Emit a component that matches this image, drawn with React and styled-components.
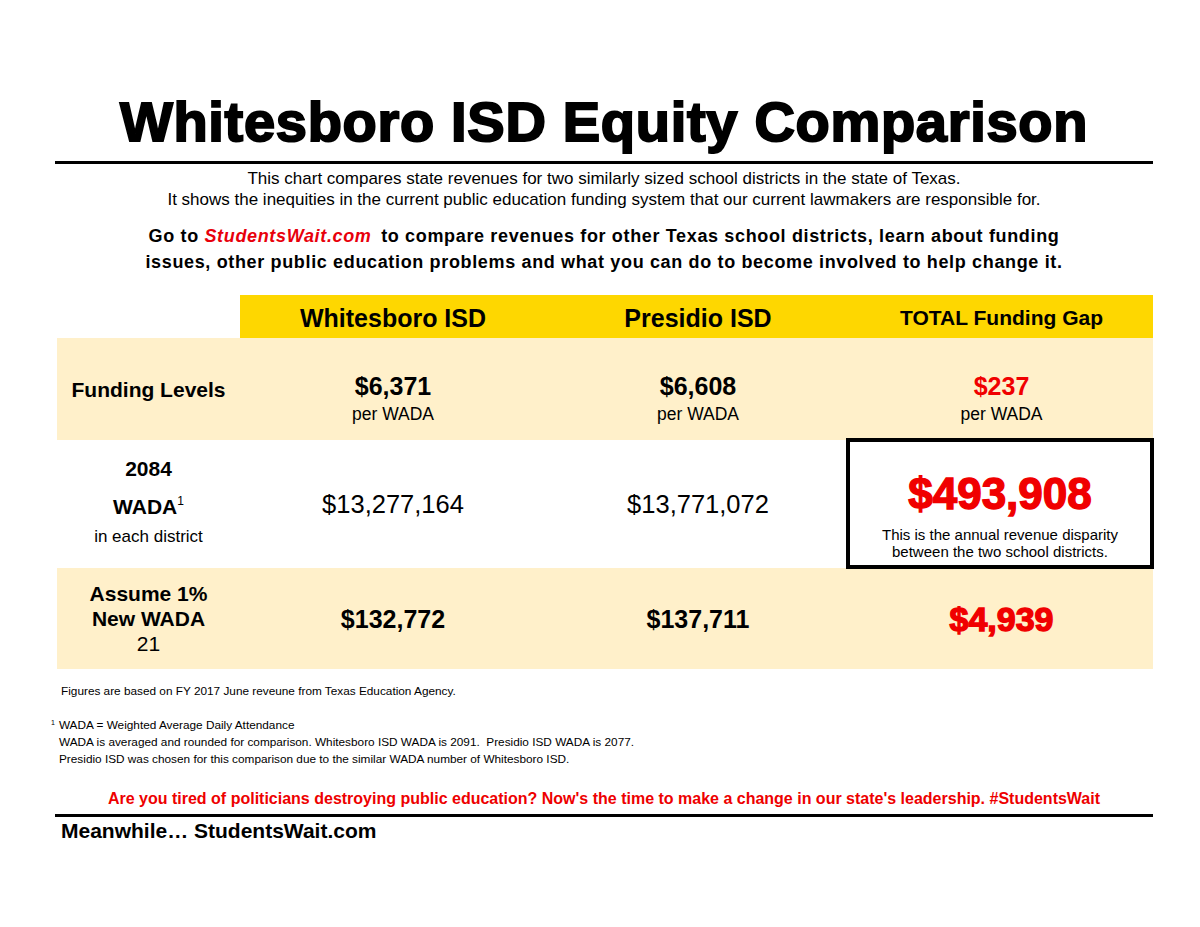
import React from "react";
import styled, { createGlobalStyle } from "styled-components";

const Global = createGlobalStyle`
  html, body { margin: 0; padding: 0; background: #fff; }
  body { font-family: "Liberation Sans", Arial, sans-serif; color: #000; }
`;

const Page = styled.div`
  width: 1098px;
  margin-left: 55px;
  padding-top: 90px;
  display: flex;
  flex-direction: column;
`;

const Title = styled.h1`
  margin: 0;
  font-size: 56px;
  line-height: 64px;
  font-weight: 700;
  text-align: center;
  -webkit-text-stroke: 2px #000;
  letter-spacing: 0.7px;
  white-space: nowrap;
`;

const Rule = styled.div`
  height: 3px;
  background: #000;
  margin-top: ${(p) => p.$top || 0}px;
`;

const Intro = styled.p`
  margin: 4px 0 0;
  font-size: 17px;
  line-height: 21px;
  text-align: center;
`;

const GoText = styled.p`
  margin: 13px 0 0;
  font-size: 18px;
  line-height: 26px;
  font-weight: 700;
  letter-spacing: 0.65px;
  text-align: center;
  white-space: nowrap;
`;

const Link = styled.span`
  color: #e8000b;
  font-style: italic;
  margin-right: 4px;
`;

const Table = styled.div`
  margin-top: 20px;
  margin-left: 2px;
  display: grid;
  grid-template-columns: 183px 306px 304px 303px;
`;

const HeadBlank = styled.div``;

const HeadCell = styled.div`
  background: #fed700;
  height: 43px;
  padding-top: 3px;
  box-sizing: border-box;
  display: flex;
  align-items: center;
  justify-content: center;
  font-weight: 700;
  font-size: ${(p) => p.$size || 25}px;
`;

const Cell = styled.div`
  background: ${(p) => (p.$tint ? "#fff0ca" : "#fff")};
  height: ${(p) => p.$h}px;
  box-sizing: border-box;
  padding-top: ${(p) => p.$pt || 0}px;
  padding-bottom: ${(p) => p.$pb || 0}px;
  display: flex;
  flex-direction: column;
  align-items: center;
  justify-content: center;
  text-align: center;
`;

const GapBox = styled.div`
  height: 131px;
  margin: -2px -1px -1px -4px;
  padding-top: 28px;
  border: 4px solid #000;
  box-sizing: border-box;
  background: #fff;
  display: flex;
  flex-direction: column;
  align-items: center;
  text-align: center;
  position: relative;
  z-index: 1;
`;

const Label = styled.div`
  font-weight: ${(p) => (p.$regular ? 400 : 700)};
  font-size: ${(p) => p.$size || 21}px;
  line-height: ${(p) => p.$lh || 25}px;
`;

const Sup = styled.sup`
  font-weight: 400;
  font-size: 12px;
  vertical-align: 9px;
  line-height: 0;
`;

const Amount = styled.div`
  font-weight: ${(p) => (p.$regular ? 400 : 700)};
  font-size: ${(p) => p.$size || 25}px;
  line-height: ${(p) => p.$lh || 30}px;
  color: ${(p) => (p.$red ? "#f00000" : "#000")};
  ${(p) => (p.$heavy ? "-webkit-text-stroke: 1.4px currentColor;" : "")}
`;

const Per = styled.div`
  font-size: 17.5px;
  line-height: 21px;
  margin-top: 3px;
`;

const BoxNote = styled.div`
  font-size: 15px;
  line-height: 17px;
  margin-top: 8px;
`;

const Notes = styled.div`
  margin-top: 14px;
  padding-left: 6px;
  font-size: 11.8px;
  line-height: 17px;
`;

const NoteGap = styled.div`
  height: 14px;
`;

const NoteLine = styled.div`
  margin-left: ${(p) => (p.$indent ? -2 : 0)}px;
`;

const NoteSup = styled.span`
  font-size: 7px;
  vertical-align: 4px;
  margin-left: -8px;
  margin-right: 4px;
`;

const Call = styled.p`
  margin: 22px 0 0;
  text-align: center;
  color: #ee0000;
  font-weight: 700;
  font-size: 16px;
  line-height: 18px;
  white-space: nowrap;
`;

const Footer = styled.div`
  margin-top: 2px;
  padding-left: 6px;
  font-weight: 700;
  font-size: 21px;
  line-height: 24px;
`;

export default function App() {
  return (
    <>
      <Global />
      <Page>
        <Title>Whitesboro ISD Equity Comparison</Title>
        <Rule $top={7} />
        <Intro>
          This chart compares state revenues for two similarly sized school districts in the state of Texas.
          <br />
          It shows the inequities in the current public education funding system that our current lawmakers are responsible for.
        </Intro>
        <GoText>
          Go to <Link>StudentsWait.com</Link> to compare revenues for other Texas school districts, learn about funding
          <br />
          issues, other public education problems and what you can do to become involved to help change it.
        </GoText>

        <Table>
          <HeadBlank />
          <HeadCell>Whitesboro ISD</HeadCell>
          <HeadCell>Presidio ISD</HeadCell>
          <HeadCell $size={21}>TOTAL Funding Gap</HeadCell>

          <Cell $tint $h={102}>
            <Label>Funding Levels</Label>
          </Cell>
          <Cell $tint $h={102} $pt={18}>
            <Amount>$6,371</Amount>
            <Per>per WADA</Per>
          </Cell>
          <Cell $tint $h={102} $pt={18}>
            <Amount>$6,608</Amount>
            <Per>per WADA</Per>
          </Cell>
          <Cell $tint $h={102} $pt={18}>
            <Amount $red>$237</Amount>
            <Per>per WADA</Per>
          </Cell>

          <Cell $h={128} $pb={10}>
            <Label $lh={38}>2084</Label>
            <Label $lh={38}>
              WADA<Sup>1</Sup>
            </Label>
            <Label $regular $size={17} $lh={22}>in each district</Label>
          </Cell>
          <Cell $h={128}>
            <Amount $regular $size={25.5}>$13,277,164</Amount>
          </Cell>
          <Cell $h={128}>
            <Amount $regular $size={25.5}>$13,771,072</Amount>
          </Cell>
          <GapBox>
            <Amount $red $heavy $size={44} $lh={48}>$493,908</Amount>
            <BoxNote>
              This is the annual revenue disparity
              <br />
              between the two school districts.
            </BoxNote>
          </GapBox>

          <Cell $tint $h={101}>
            <Label>Assume 1%</Label>
            <Label>New WADA</Label>
            <Label $regular>21</Label>
          </Cell>
          <Cell $tint $h={101}>
            <Amount>$132,772</Amount>
          </Cell>
          <Cell $tint $h={101}>
            <Amount>$137,711</Amount>
          </Cell>
          <Cell $tint $h={101}>
            <Amount $red $heavy $size={34}>$4,939</Amount>
          </Cell>
        </Table>

        <Notes>
          <NoteLine>Figures are based on FY 2017 June reveune from Texas Education Agency.</NoteLine>
          <NoteGap />
          <NoteLine $indent>
            <NoteSup>1</NoteSup>WADA = Weighted Average Daily Attendance
          </NoteLine>
          <NoteLine $indent>
            WADA is averaged and rounded for comparison. Whitesboro ISD WADA is 2091.&nbsp; Presidio ISD WADA is 2077.
          </NoteLine>
          <NoteLine $indent>
            Presidio ISD was chosen for this comparison due to the similar WADA number of Whitesboro ISD.
          </NoteLine>
        </Notes>

        <Call>
          Are you tired of politicians destroying public education? Now's the time to make a change in our state's leadership. #StudentsWait
        </Call>
        <Rule $top={6} />
        <Footer>Meanwhile… StudentsWait.com</Footer>
      </Page>
    </>
  );
}
